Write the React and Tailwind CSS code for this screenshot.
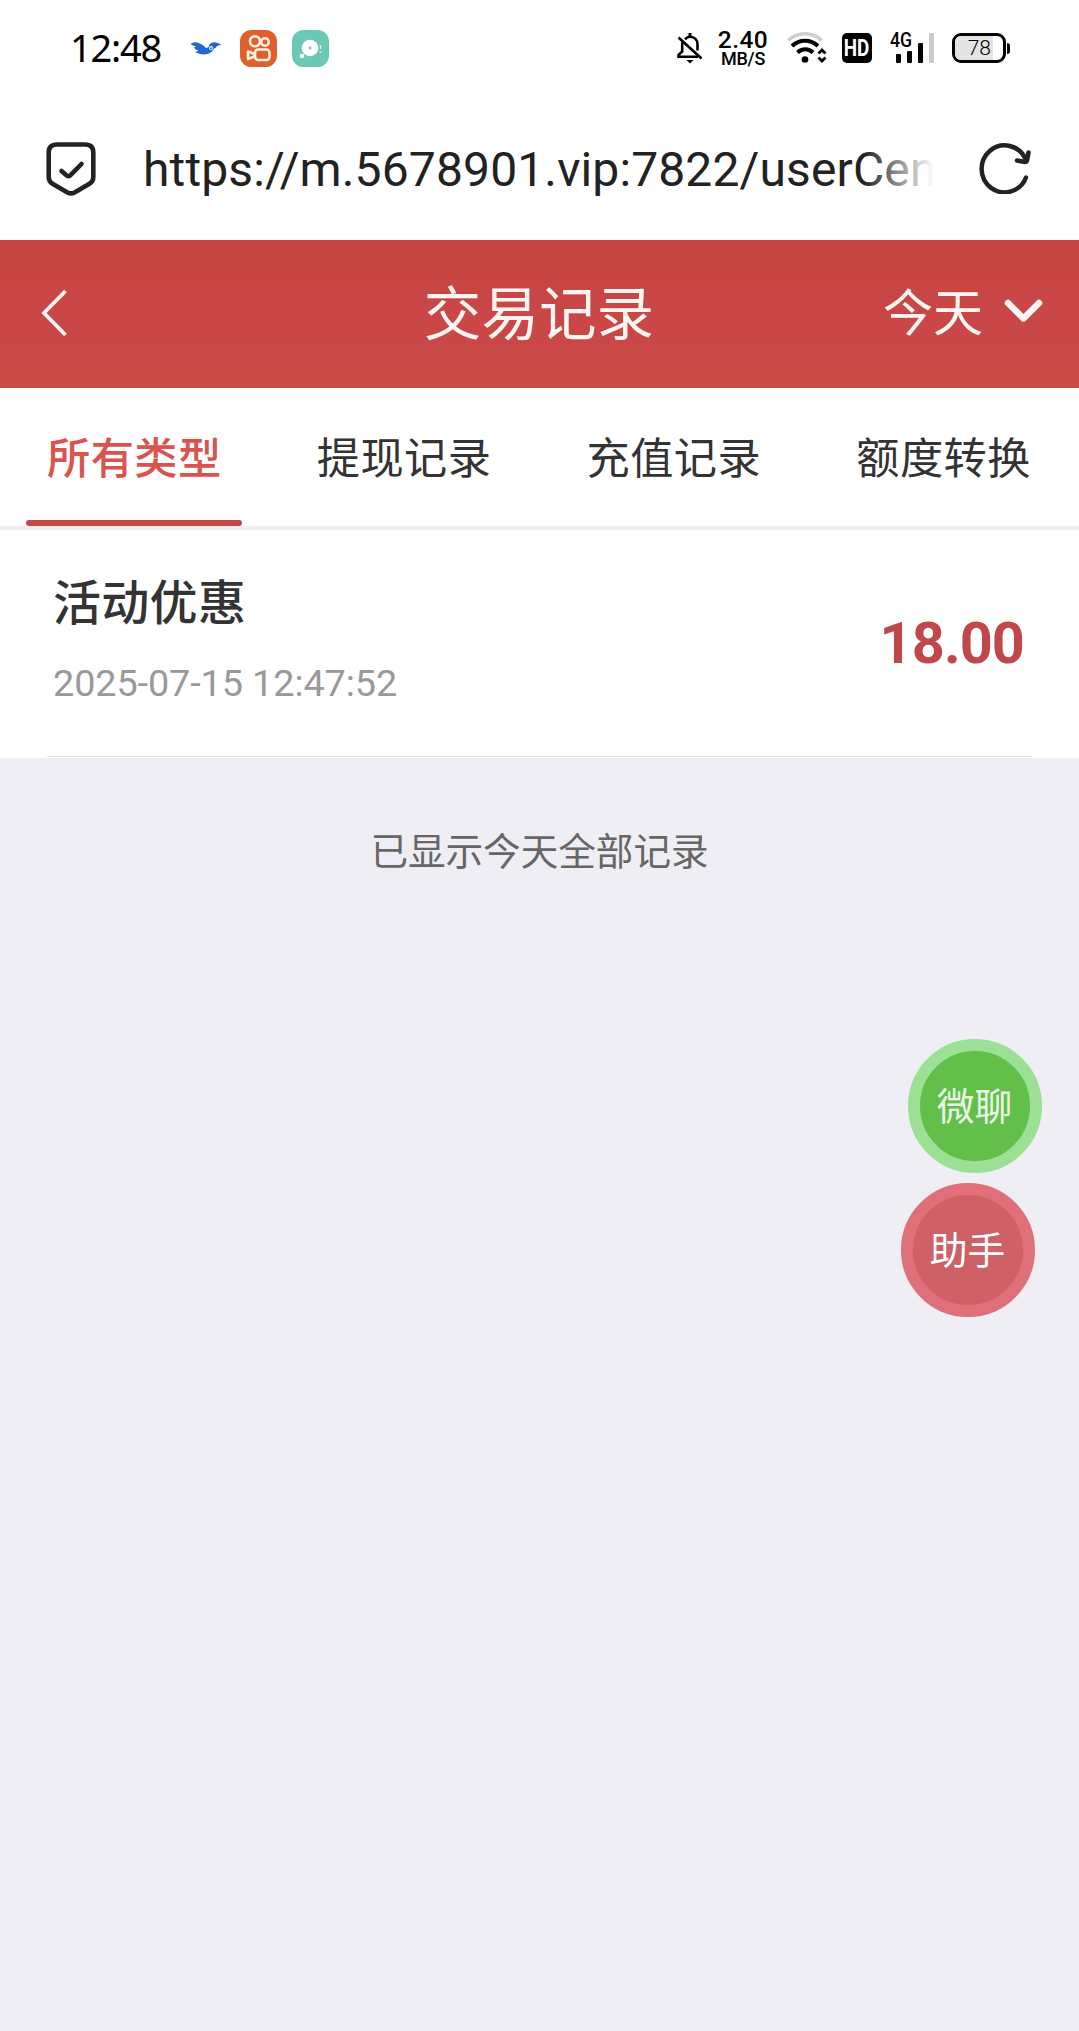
import React from 'react';

const tabs = ['所有类型', '提现记录', '充值记录', '额度转换'];

const records = [
  { id: 1, nombre: '活动优惠', fecha: '2025-07-15 12:47:52', monto: '18.00' },
];

const BirdIcon = () => (
  <svg width="32" height="16" viewBox="0 0 32 16" className="shrink-0">
    <path d="M0.5 4 C4 1.500 7 2 9.500 3.500 C12 4.500 14.500 6 16 8 C17 8 17.500 7.500 18.500 7 C19.500 2.500 25 0 31.500 5 C29 4.800 27 5.500 25.500 8 C23.500 8 23.500 10 22 11.500 C18 15 11 15.500 5 12 C7 11.500 8 11 8.500 10.500 C6 10 4.500 9 4 7 C5 7 6 6.800 6 6.300 C4 6 2 5 0.500 4 Z" fill="#2465d0" />
    <circle cx="21" cy="8" r="2" fill="#fff" />
    <circle cx="21" cy="8.200" r="1" fill="#2465d0" />
  </svg>
);

const KuaishouIcon = () => (
  <svg width="37" height="37" viewBox="0 0 37 37" className="shrink-0" fill="none" stroke="#fff0e4" strokeWidth="2.600">
    <rect width="37" height="37" rx="11.500" fill="#e0602b" stroke="none" />
    <circle cx="15" cy="11.300" r="5" />
    <circle cx="25" cy="12" r="3.800" />
    <rect x="15" y="19.500" width="14.500" height="10.500" rx="3.200" />
    <path d="M14.500 24 L8 21.500 V29 L14.500 26.500" strokeLinejoin="round" />
  </svg>
);

const DiscIcon = () => (
  <svg width="37" height="37" viewBox="0 0 37 37" className="shrink-0">
    <rect width="37" height="37" rx="11.500" fill="#6ac8b5" />
    <circle cx="18" cy="18" r="8.300" fill="#fff" />
    <circle cx="18" cy="18" r="1.400" fill="#6ac8b5" />
    <circle cx="10" cy="26" r="2.300" fill="#fff" />
    <path d="M28.500 15 V19 M28.500 21.500 V23" stroke="#d8f4ed" strokeWidth="1.600" />
  </svg>
);

const BellOffIcon = () => (
  <svg width="26" height="31" viewBox="0 0 26 31" className="shrink-0" fill="none" stroke="#000" strokeWidth="2.600">
    <path d="M8 6.300 C9.500 4.500 11 3.700 13 3.700 C17.500 3.700 20.500 7 20.500 11.500 V17.500" />
    <path d="M13 0 V4" strokeWidth="3" />
    <path d="M5.500 9 C5.200 10 5.200 11 5.200 12 V18.500 L1.500 22 V23.700 H21" />
    <path d="M1.500 4.500 L24.500 25.500" />
    <path d="M9.500 27 H16.500 L13 30.500 Z" fill="#000" stroke="none" />
  </svg>
);

const WifiIcon = () => (
  <svg width="41" height="32" viewBox="0 0 41 32" className="shrink-0" fill="none">
    <path d="M1 8.500 C11 -0.500 25 -0.500 35 8.500" stroke="#cfcfcf" strokeWidth="3.600" />
    <path d="M5 14 C12.500 7 23.500 7 31 14" stroke="#000" strokeWidth="4" />
    <path d="M10.500 20.500 C15 16.300 21.500 16.300 26 20.500" stroke="#000" strokeWidth="4" />
    <circle cx="18" cy="27.500" r="3.300" fill="#000" />
    <path d="M31.500 21.500 L35 18 L38.500 21.500 M31.500 25.500 L35 29 L38.500 25.500" stroke="#000" strokeWidth="2.800" />
  </svg>
);

const ShieldIcon = () => (
  <svg width="50" height="54" viewBox="0 0 50 54" className="shrink-0" fill="none" stroke="#222" strokeWidth="4.600" strokeLinecap="round" strokeLinejoin="round">
    <path d="M11 2.500 H39 Q47.300 2.500 47.300 10.500 V35 Q47.300 39.500 43.500 41.800 L28.500 50.500 Q25 52.300 21.500 50.500 L6.500 41.800 Q2.700 39.500 2.700 35 V10.500 Q2.700 2.500 11 2.500 Z" />
    <path d="M15.500 29 L21 33.700 Q22.500 34.700 24 33.700 L35.500 22" />
  </svg>
);

const ReloadIcon = () => (
  <svg width="52" height="52" viewBox="0 0 52 52" className="shrink-0" fill="none" stroke="#222" strokeWidth="4.500" strokeLinecap="round" strokeLinejoin="round">
    <path d="M47 35.500 A23 23.500 0 1 1 46.500 17" />
    <path d="M49.500 10.500 L48 18.500 Q47.500 20 46 20 L38 18.500" />
  </svg>
);

const StatusBar = () => (
  <div className="flex items-center h-24 pl-[70px] pr-[69px]">
    <span className="w-[120px] pb-[2px] font-['Noto_Sans'] text-[38px] leading-none tracking-[-1.2px] text-black">12:48</span>
    <BirdIcon />
    <div className="flex items-center gap-[15px] ml-[18px]">
      <KuaishouIcon />
      <DiscIcon />
    </div>

    <div className="flex items-center ml-auto">
      <BellOffIcon />
      <div className="flex flex-col items-center w-[50px] ml-[15px] font-medium text-black">
        <span className="text-[24.5px] leading-[20px] tracking-[0.5px]">2.40</span>
        <span className="pt-px text-[18px] leading-[16px] tracking-[-0.2px]">MB/S</span>
      </div>
      <div className="ml-[19px]"><WifiIcon /></div>
      <div className="flex items-center justify-center w-[30px] h-[30px] ml-[14px] rounded-[5px] bg-black text-white">
        <span className="scale-x-[0.82] text-[23px] font-bold leading-none">HD</span>
      </div>
      <div className="relative flex items-end gap-[6px] h-[30px] w-[44px] ml-[18px] pl-[6px]">
        <span className="absolute left-0 -top-[3px] origin-left scale-x-[0.84] text-[21px] font-medium leading-none text-black">4G</span>
        <span className="w-[5px] h-[9px] shrink-0 rounded-[1px] bg-black"></span>
        <span className="w-[5px] h-[12px] shrink-0 rounded-[1px] bg-black"></span>
        <span className="w-[5px] h-[20px] shrink-0 rounded-[1px] bg-black"></span>
        <span className="w-[5px] h-[30px] shrink-0 rounded-[1px] bg-[#cbcbcb]"></span>
      </div>
      <div className="flex items-center ml-[18px]">
        <div className="flex w-[54px] h-[30px] rounded-[9px] border-[3px] border-black overflow-hidden">
          <span className="flex items-center justify-end w-[38px] pr-[2px] bg-[#e4e4e4] text-[21px] font-light leading-none text-black">78</span>
        </div>
        <span className="w-[3px] h-[11px] ml-[1px] rounded-r-sm bg-black"></span>
      </div>
    </div>
  </div>
);

const AddressBar = () => (
  <div className="flex items-center h-36 pl-[46px] pr-[48px] pt-[2px]">
    <ShieldIcon />
    <div className="relative w-[800px] ml-[46px] pl-px pt-[2px] whitespace-nowrap text-[48px] leading-[64px] tracking-[0.13px] text-[#222]">
      https://m.5678901.vip:7822/userCen
      <div className="absolute right-0 top-0 h-full w-[78px] bg-linear-to-r from-white/0 to-white to-90%"></div>
    </div>
    <div className="ml-auto pb-[2px]"><ReloadIcon /></div>
  </div>
);

const Header = () => (
  <header className="grid grid-cols-3 items-center h-[148px] pl-10 pr-[36px] bg-linear-to-b from-[#c54540] via-[#c94747] to-[#c94a47] text-[#fff5f3]">
    <svg width="28" height="48" viewBox="0 0 28 48" fill="none" stroke="currentColor" strokeWidth="3.800" className="mb-[2px]">
      <path d="M25.500 2 L4 24 L25.500 46" />
    </svg>
    <h1 className="pr-[5px] pt-[3px] text-center text-[57.6px] leading-none whitespace-nowrap">交易记录</h1>
    <div className="flex items-center justify-end gap-[21px]">
      <span className="text-[50px] leading-none">今天</span>
      <svg width="39" height="24" viewBox="0 0 39 24" fill="none" stroke="currentColor" strokeWidth="6.500" strokeLinecap="round" strokeLinejoin="round" className="mb-[6px]">
        <path d="M4 4 L19.500 19.500 L35 4" />
      </svg>
    </div>
  </header>
);

const FloatButton = ({ className, children }) => (
  <button className={`flex items-center justify-center w-[134px] h-[134px] pt-[3px] rounded-full border-12 text-[37.8px] leading-none ${className}`}>
    {children}
  </button>
);

export default function App() {
  return (
    <div className="relative w-[1079px] h-[2031px] overflow-hidden bg-[#eeeef4] font-[Roboto,'Noto_Sans_CJK_SC',sans-serif]">
      <div className="bg-white">
        <StatusBar />
        <AddressBar />
      </div>
      <Header />

      <nav className="grid grid-cols-4 h-[142px] bg-white border-b-4 border-[#eee]">
        {tabs.map((tab, i) => (
          <div key={tab} className="relative flex items-center justify-center pt-[5px] pr-px text-[43.2px] leading-none tracking-[0.5px]">
            <span className={i === 0 ? 'font-medium text-[#d9534f]' : 'text-[#333]'}>{tab}</span>
            {i === 0 && <div className="absolute bottom-0 left-[26px] w-[216px] h-[6px] rounded-full bg-[#c1484a]"></div>}
          </div>
        ))}
      </nav>

      <div className="bg-white px-[47px] pb-px">
        {records.map((r) => (
          <div key={r.id} className="flex items-center justify-between h-[227px] pl-[6px] pr-[8px] border-b border-[#e4e4e6]">
            <div className="flex flex-col gap-[37px] pb-[3px]">
              <span className="text-[48px] font-medium leading-none tracking-[0.3px] text-[#333]">{r.nombre}</span>
              <span className="text-[37.8px] leading-none tracking-[-0.1px] text-[#999]">{r.fecha}</span>
            </div>
            <span className="pt-[2px] text-[57.6px] font-bold leading-none tracking-[-0.9px] text-[#c1484a]">{r.monto}</span>
          </div>
        ))}
      </div>

      <p className="mt-[68px] text-center text-[37.6px] leading-[52px] text-[#666]">已显示今天全部记录</p>

      <div className="absolute top-[1039px] right-[37.5px] flex flex-col gap-[10px]">
        <FloatButton className="bg-[#62bf4a] border-[#9be095] text-[#ecfbe8]">微聊</FloatButton>
        <FloatButton className="-ml-[7px] bg-[#cf6066] border-[#df7079] text-white">助手</FloatButton>
      </div>
    </div>
  );
}
